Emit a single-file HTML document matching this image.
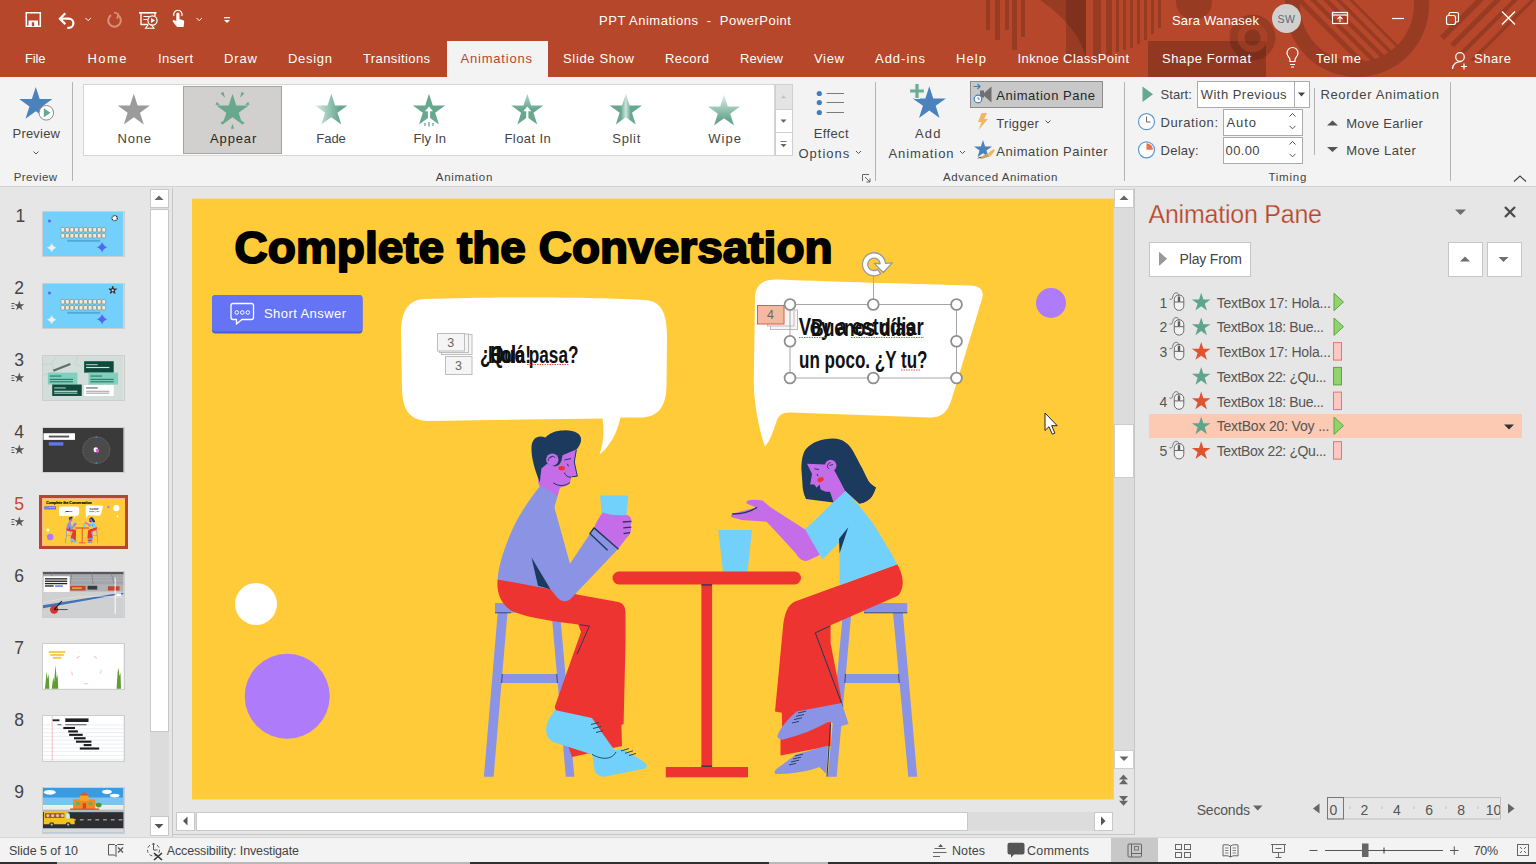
<!DOCTYPE html>
<html><head><meta charset="utf-8"><title>PPT Animations - PowerPoint</title>
<style>
*{box-sizing:border-box;margin:0;padding:0}
html,body{width:1536px;height:864px;overflow:hidden;background:#e6e6e6;font-family:"Liberation Sans",sans-serif;}
.abs{position:absolute}
.t{position:absolute;white-space:pre}
#titlebar{position:absolute;left:0;top:0;width:1536px;height:77px;background:#b7472a;overflow:hidden}
#ribbon{position:absolute;left:0;top:77px;width:1536px;height:110px;background:#f3f3f3;border-bottom:1px solid #d2d2d2}
.sep{position:absolute;width:1px;background:#b4b4b4}
#left{position:absolute;left:0;top:187px;width:172px;height:651px;background:#e6e6e6}
#status{position:absolute;left:0;top:836.500px;width:1536px;height:27.500px;background:#f3f3f3;border-top:1px solid #d6d6d6}
#pane{position:absolute;left:1135px;top:187px;width:401px;height:650px;background:#e6e6e6}
svg{overflow:visible}
</style></head><body>
<!--SLIDE-->
<div class="abs" style="left:173px;top:188px;width:962px;height:650px;background:#e6e6e6"></div>
<svg class="abs" style="left:0;top:0" width="1536" height="864" viewBox="0 0 1536 864">
<g id="slideart">
<rect x="192" y="198.600" width="921.800" height="600.900" fill="#ffcb38"/>
<text x="234.600" y="263.200" font-family="Liberation Sans, sans-serif" font-weight="bold" font-size="43.600" textLength="598" lengthAdjust="spacingAndGlyphs" fill="#000" stroke="#000" stroke-width="1.900" stroke-linejoin="round">Complete the Conversation</text>
<circle cx="256" cy="604" r="21" fill="#fff"/><circle cx="287.200" cy="696.200" r="42.500" fill="#ae7bfa"/><circle cx="1051" cy="303" r="15" fill="#ae7bfa"/>
<rect x="212" y="295" width="150.500" height="38.500" rx="3.500" fill="#4a5bdc"/><rect x="212" y="295" width="150.500" height="36.500" rx="3.500" fill="#6574f5"/>
<path d="M233 303.500 h18.500 a2 2 0 0 1 2 2 v12 a2 2 0 0 1 -2 2 h-9.500 l-5.500 4.500 v-4.500 h-3.500 a2 2 0 0 1 -2 -2 v-12 a2 2 0 0 1 2 -2z" fill="none" stroke="#fff" stroke-width="1.300"/>
<g fill="none" stroke="#fff" stroke-width="1"><circle cx="236.800" cy="312.500" r="1.800"/><circle cx="242.300" cy="312.500" r="1.800"/><circle cx="247.800" cy="312.500" r="1.800"/></g>
<text x="264" y="317.500" font-family="Liberation Sans, sans-serif" font-size="13" textLength="82" lengthAdjust="spacing" fill="#fff">Short Answer</text>
<path d="M425 299 C500 296.500 600 297 645 300 C662 301 667.500 314 667 340 L666.500 385 C666.500 408 657 417.500 640 417.500 L620.500 417.500 C617 434 609 447 599.500 454.500 C603.500 444 604.500 430 602.500 418.500 L430 421 C410 421 402.500 411 402 388 L401 335 C401 310 408 300 425 299Z" fill="#fff"/>
<path d="M755 296 C756 284 764 279 778 279.500 C840 282 920 284 970 285.500 C978.500 285.800 984.500 289 982.300 298 L952 398 C948 412 942 417.500 930 417.500 L790 412.500 C783 412 779 415 777 420 C773 432 770 441 765 446.500 C759 430 753.500 402 753.800 380Z" fill="#fff"/>
<text x="480" y="362.500" font-family="Liberation Sans, sans-serif" font-weight="bold" font-size="23.500" lengthAdjust="spacingAndGlyphs" fill="#111" textLength="98.500">¿Qué pasa?</text>
<text x="490.500" y="362.500" font-family="Liberation Sans, sans-serif" font-weight="bold" font-size="23.500" lengthAdjust="spacingAndGlyphs" fill="#111" textLength="34">Hola</text>
<text x="488" y="363" font-family="Liberation Sans, sans-serif" font-weight="bold" font-size="23.500" lengthAdjust="spacingAndGlyphs" fill="#111" textLength="43">Hola!</text>
<text x="798.800" y="334.600" font-family="Liberation Sans, sans-serif" font-weight="bold" font-size="23.500" lengthAdjust="spacingAndGlyphs" fill="#111" textLength="125">Voy a estudiar</text>
<text x="811" y="336" font-family="Liberation Sans, sans-serif" font-weight="bold" font-size="23.500" lengthAdjust="spacingAndGlyphs" fill="#111" textLength="104">Buenos días</text>
<text x="799" y="367.500" font-family="Liberation Sans, sans-serif" font-weight="bold" font-size="23.500" lengthAdjust="spacingAndGlyphs" fill="#111" textLength="128.500">un poco. ¿Y tu?</text>
<polygon points="718.300,530 752,530 747.500,572 723,572" fill="#72d1fa"/>
<rect x="612.500" y="571.500" width="188.500" height="13" rx="6.500" fill="#ee3430"/>
<rect x="701.400" y="584" width="10.700" height="184" fill="#ee3430"/><rect x="665.800" y="767" width="82.200" height="10.300" fill="#ee3430"/>
<rect x="701.400" y="584.300" width="10.700" height="1.300" fill="#1c3a5e"/><rect x="701.400" y="765.500" width="10.700" height="1.300" fill="#1c3a5e"/>
<g fill="#8a93e4"><rect x="495" y="603" width="66" height="9.800"/><polygon points="497.800,612 507.500,612 493.600,776.700 483.900,776.700"/><polygon points="551.500,612 560,612 574.300,776.700 565.800,776.700"/><polygon points="502,674 557,674 558,683 501,683"/></g>
<path d="M495 612.800 h16 M502.300 674 l-.7 9 M556.700 674 l.8 9" stroke="#1c3a5e" stroke-width="0.800" fill="none"/>
<path d="M497.800 579 C496 590 500 604 512 611 C530 619 560 622 578.300 624.400 L581 632 L554.700 707 L572 757 L622 746 L621.400 725 L623.600 724 L625.500 643 L625.500 613 C625.500 605 622 602.500 617 601.700 L578.300 594.700 L550 588 Z" fill="#ee3430"/>
<path d="M579.700 624.700 L589.400 626 L577 654.400" stroke="#1c3a5e" stroke-width="0.900" fill="none"/>
<path d="M554.700 710 L592 718 C599 728 608 742 616 751.500 L592 754.500 L553 742 C545 738 544.500 728 549 719 Z" fill="#72d1fa"/>
<path d="M592 753 C600 752.500 612 750.500 621 749 C630 753 640 759 645.500 763 C647.500 765 647 767.500 645 768.500 L604 776.800 C598 776.500 595 773 594.500 770 Z" fill="#72d1fa"/>
<g stroke="#1c3a5e" stroke-width="0.900" fill="none"><path d="M591 724.500 l8 -2 M593 728.500 l8 -2 M596 732.500 l7 -1.800 M592 754.300 C600 759 611 761 616 752"/><path d="M621 751 l8 -2.500 M625 753.300 l8 -2.500 M629 755.600 l7 -2.200"/></g>
<path d="M538 482 L545 501 L553 502 L557.500 496.500 L560 487.700 L565.800 486 C568.500 485 570 483.500 570.200 482 L571.600 476.800 L577.300 476.300 L574.200 462 L576.800 449 L560 452 L540 462 Z" fill="#c56ce8"/>
<path d="M539.800 482.500 C535 470 531 458 531.500 447 C532 438 538 434.500 545.500 437.500 C549 433 556 430.300 563.750 430.400 C574 430 582.500 434 581 441 C580.500 444 578.500 447 576.800 449.200 L562.500 455.200 L561.500 460.500 C560.500 464 558 466 555 466.500 L547 463.750 L541.400 468.400 Z" fill="#1c3a5e"/>
<circle cx="552.300" cy="459.600" r="6.200" fill="#c56ce8"/><path d="M548.300 461 a4 4 0 0 1 7 -3.300 M549.500 458.300 l3 -2" stroke="#1c3a5e" stroke-width="0.800" fill="none"/>
<ellipse cx="561.700" cy="468.200" rx="3.300" ry="2.200" fill="#ee3430"/>
<path d="M576.300 450 L574.300 462 L577.300 476.200 L571.600 476.800 M564.300 460 L571 458.500 M567.500 463.800 L568.400 466.400 M564.300 472.600 Q566 477 571 477.300 M553.300 483 Q562 488.500 570 482.500" stroke="#1c3a5e" stroke-width="1" fill="none"/>
<path d="M540.800 485.600 C530 498 515 520 508 540 C500 560 498 572 497.800 579.400 L550.500 589.200 L556 596 C560 601.500 566 603 570.500 599 L618 549 L594 527.700 L570 563.750 L554.400 507.500 L557.500 496 Z" fill="#8a93e4"/>
<polygon points="531.500,557.500 538,585.700 550.500,589.200" fill="#1c3a5e"/>
<polygon points="600.200,495.400 628.300,495.400 626.300,516.500 601.700,516.500" fill="#72d1fa"/>
<path d="M594 527.700 C597 521 599.500 516 603 512.500 C610 515.500 620 515.500 627 515 C632 516.500 632.500 522 630.500 525.500 C632 530 630.500 535 626.500 538 L618 549 Z" fill="#c56ce8"/>
<path d="M622.800 522 l8.500 -.6 M623.300 527.800 l8 -.7 M623.500 533.700 l6.500 -1" stroke="#1c3a5e" stroke-width="1.300" fill="none"/>
<path d="M607.600 550.300 L589.900 533.600 L594 527.900 L618.500 549.300" stroke="#1c3a5e" stroke-width="1.400" fill="none" stroke-linejoin="round"/>
<g fill="#8a93e4"><rect x="863.900" y="603" width="43.300" height="9.800"/><polygon points="843,612 851.400,612 836.700,776.700 827.800,776.700"/><polygon points="893,612.800 902.800,612.800 917.200,776.700 908.300,776.700"/><polygon points="844.400,673.900 899,673.900 899.800,683 843.500,683"/></g>
<path d="M864 612.800 h43.300 M845.500 673.900 l-.7 9 M898.500 673.900 l.8 9" stroke="#1c3a5e" stroke-width="0.800" fill="none"/>
<polygon points="780.500,737 831,721 830.500,746 780.500,755.500" fill="#ee3430"/>
<path d="M795.800 754.400 L828 745.500 L826.400 774 L819.400 767 C812 770.500 790 774.500 775.500 774 C773 772 776 769 779 767 C785 763 791 758 795.800 754.400 Z" fill="#8a93e4"/>
<path d="M814 522 L805.200 529.400 L770.800 507.500 L762.500 500.500 C758 499.500 752 499.500 749 500.200 C746 501 745.500 503 747.500 504 L756.300 507.500 L733 513.500 C730.500 514.500 730.500 517 732.500 517.500 L741.700 520 L766.700 521.700 L795.800 553.300 C799 559 803 562 808 560.500 L818.750 555.400 L828 545 Z" fill="#c56ce8"/>
<path d="M732.300 514 C742 514 751 511.500 757 507.300" stroke="#1c3a5e" stroke-width="1.300" fill="none"/>
<path d="M840.300 585 L897.200 564.200 C902 572 904 582 902 588 C901 592 899 595 897.200 596 L830.600 625.300 L830.600 643.300 L843 707 L797 711.400 L782 712.800 L775 711.400 L783.300 623.900 C785 612 788 605 794.400 601.700 Z" fill="#ee3430"/>
<path d="M830 626 L815.300 632.800 L843 707 M830.500 724 L827 776.700" stroke="#1c3a5e" stroke-width="1" fill="none"/>
<polygon points="781.800,712 798,711 790,722 783.500,731 782.300,731" fill="#ee3430"/>
<path d="M797 711.400 L841.700 703 L848.600 724 L838.900 726.700 L829 721 C815 730 800 735 783.300 739.500 C778 739.500 776.500 737 777.800 735 C780 728 790 716 797 711.400 Z" fill="#8a93e4"/>
<g stroke="#1c3a5e" stroke-width="0.900" fill="none"><path d="M798 713 l8 -1.800 M796 716.300 l8 -1.800 M794 719.600 l8 -1.800 M792 723 l7 -1.600"/><path d="M795 756 l8 -1.800 M793 759 l8 -1.800 M791 762 l8 -1.800 M789 765 l7 -1.600"/></g>
<path d="M801.400 468.750 C801.500 458 803.500 452 806 449 C812 442 822 438.500 833 438.500 C843 438.500 849 444 853 451 C857 458 859 463 862.300 468.750 C864.500 473 866 477 868.500 481.250 C870.500 484 873 486 875.800 487.500 C874.500 491.500 873 495 870.600 498 C867.500 501 864 503 859.200 503.600 L845.100 490.600 L833.600 502.600 L806 499 C803.500 494 802.500 489 802.400 483.300 Z" fill="#1c3a5e"/>
<path d="M807 463.750 L824.800 464.600 L831 465.800 L835.200 471.900 L845.100 490.600 L849 500 L840 510 L833.600 502.600 L830 491.700 L825.800 491.700 L820.600 489.600 L819.600 484.400 L816.500 487.800 L814.400 484.400 L810.200 484.400 L812 474 Z" fill="#c56ce8"/>
<circle cx="830.700" cy="465.600" r="5.800" fill="#c56ce8"/><path d="M829 469 a3.600 3.600 0 0 1 1.500 -6.500 M829.500 465.500 l3.500 -1" stroke="#1c3a5e" stroke-width="0.900" fill="none"/>
<ellipse cx="820.600" cy="479.700" rx="3.300" ry="2.300" transform="rotate(-25 820.600 479.700)" fill="#ee3430"/>
<path d="M814.400 468.750 L819 469.500 M817 474 L818 476.200" stroke="#1c3a5e" stroke-width="1" fill="none"/>
<path d="M845.800 490.800 C856 502 872 520 881.300 536.700 C888 548 893 556 896.900 563.750 L897.200 564.500 L839.600 585.300 L839.400 542.500 L822.400 559.500 L805.200 529.400 L832.300 503.300 Z" fill="#72d1fa"/>
<polygon points="848.300,527.300 839,538.750 839.600,553.300" fill="#1c3a5e"/>
<path d="M836 470 L845 490.400 L859.200 503.600 C864 503 867.500 501 870.600 498 C873 495 874.500 491.500 875.800 487.500 C873 486 870.500 484 868.500 481.250 C866 477 864.500 473 862.300 468.750 L856 458 Z" fill="#1c3a5e"/>
</g>
<g stroke="#e0413a" stroke-width="0.900" stroke-dasharray="1.500 1" fill="none"><path d="M527 364.500 h42 M799 337.500 h28 M851 337.500 h73 M901 370 h19"/></g>
<rect x="441.500" y="334.500" width="30.500" height="20" fill="#f5f5f5" stroke="#bdbdbd" stroke-width="1"/><rect x="439.500" y="334" width="29" height="18.500" fill="#f5f5f5" stroke="#bdbdbd" stroke-width="1"/><rect x="437.500" y="333.500" width="27" height="17.500" fill="#f5f5f5" stroke="#bdbdbd" stroke-width="1"/>
<rect x="445.500" y="356.500" width="26.500" height="18" fill="#f5f5f5" stroke="#bdbdbd" stroke-width="1"/>
<rect x="770.500" y="310" width="27" height="19.500" fill="#f5f5f5" stroke="#bdbdbd" stroke-width="1"/><rect x="767.500" y="307.500" width="26.500" height="18.500" fill="#f5f5f5" stroke="#bdbdbd" stroke-width="1"/>
<rect x="757.500" y="305.500" width="26.500" height="18.500" fill="#f5b9a3" stroke="#db5e3e" stroke-width="1"/>
<path d="M873.500 276 V304.500" stroke="#a6a6a6" stroke-width="1"/>
<rect x="790" y="304.500" width="166.500" height="73.500" fill="none" stroke="#a6a6a6" stroke-width="1"/>
<circle cx="790.0" cy="304.5" r="5.400" fill="#fff" stroke="#8f8f8f" stroke-width="1.800"/>
<circle cx="873.3" cy="304.5" r="5.400" fill="#fff" stroke="#8f8f8f" stroke-width="1.800"/>
<circle cx="956.5" cy="304.5" r="5.400" fill="#fff" stroke="#8f8f8f" stroke-width="1.800"/>
<circle cx="790.0" cy="341.3" r="5.400" fill="#fff" stroke="#8f8f8f" stroke-width="1.800"/>
<circle cx="956.5" cy="341.3" r="5.400" fill="#fff" stroke="#8f8f8f" stroke-width="1.800"/>
<circle cx="790.0" cy="378.0" r="5.400" fill="#fff" stroke="#8f8f8f" stroke-width="1.800"/>
<circle cx="873.3" cy="378.0" r="5.400" fill="#fff" stroke="#8f8f8f" stroke-width="1.800"/>
<circle cx="956.5" cy="378.0" r="5.400" fill="#fff" stroke="#8f8f8f" stroke-width="1.800"/>
<path d="M880.600 273.720 A11.500 11.500 0 1 1 885.460 263.300 L892.300 262.900 L883.300 272.500 L874.200 263.400 L880.180 263.760 A6.200 6.200 0 1 0 877.560 269.380 Z" fill="#fff" stroke="#9a9a9a" stroke-width="1.300" stroke-linejoin="round"/>
<path d="M1045 413 v17.500 l4 -3.800 l3.300 7.500 l2.600 -1.100 l-3.200 -7.400 h5.500z" fill="#fff" stroke="#222" stroke-width="1" stroke-linejoin="round"/>
</svg>
<span class="t" style="left:447.30px;top:332.97px;font-size:12.5px;line-height:20px;color:#666;">3</span>
<span class="t" style="left:455.00px;top:356.17px;font-size:12.5px;line-height:20px;color:#666;">3</span>
<span class="t" style="left:767.00px;top:305.17px;font-size:12.5px;line-height:20px;color:#666;">4</span>
<div class="abs" style="left:1114px;top:188.500px;width:20px;height:561px;background:#dcdcdc"></div>
<div class="abs" style="left:1114px;top:188.500px;width:20px;height:19px;background:#fff;border:1px solid #cdcdcd"></div>
<div class="abs" style="left:1114px;top:424px;width:20px;height:54px;background:#fff;border:1px solid #cdcdcd"></div>
<div class="abs" style="left:1114px;top:749.500px;width:20px;height:19px;background:#fff;border:1px solid #cdcdcd"></div>
<svg class="abs" style="left:1114px;top:188px" width="20" height="630" viewBox="0 0 20 630"><path d="M5.500 12 l4.500 -4.500 l4.500 4.500z" fill="#666"/><path d="M5.500 568.500 l4.500 4.500 l4.500 -4.500z" fill="#666"/><path d="M5 591.500 l4.500 -5 l4.500 5z M5 596.300 l4.500 -5 l4.500 5z" fill="#666"/><path d="M5 608 l4.500 5 l4.500 -5z M5 612.800 l4.500 5 l4.500 -5z" fill="#666"/></svg>
<div class="abs" style="left:1134px;top:188px;width:1px;height:647px;background:#c6c6c6"></div>
<div class="abs" style="left:173px;top:834px;width:962px;height:1px;background:#c6c6c6"></div>
<div class="abs" style="left:176px;top:811.500px;width:936.500px;height:19px;background:#dcdcdc"></div>
<div class="abs" style="left:176px;top:811.500px;width:19px;height:19px;background:#fff;border:1px solid #c8c8c8"></div>
<div class="abs" style="left:195.500px;top:811.500px;width:772px;height:19px;background:#fff;border:1px solid #c8c8c8"></div>
<div class="abs" style="left:1093.500px;top:811.500px;width:19px;height:19px;background:#fff;border:1px solid #c8c8c8"></div>
<svg class="abs" style="left:176px;top:811px" width="940" height="20" viewBox="0 0 940 20"><path d="M11.500 5.500 l-4.500 4.500 l4.500 4.500z" fill="#555"/><path d="M925 5.500 l4.500 4.500 l-4.500 4.500z" fill="#555"/></svg>
<!--LEFT-->
<div id="left"></div>
<span class="t" style="left:15.50px;top:205.64px;font-size:17.5px;line-height:20px;color:#444;">1</span>
<svg class="abs" style="left:43.400px;top:211.6px;outline:1px solid #cdcdcd" width="80.400" height="44.7" viewBox="0 0 83 47" preserveAspectRatio="none"><rect width="83" height="47" fill="#72d0fa"/><circle cx="6.700" cy="9.500" r="1.600" fill="#5b6be6"/><circle cx="74" cy="6.500" r="2.700" fill="#fff" stroke="#333" stroke-width="1.300" stroke-dasharray="1.400 0.600"/><path d="M9.0 32.5 Q10.1 36.4 14.0 37.5 Q10.1 38.6 9.0 42.5 Q7.9 38.6 4.0 37.5 Q7.9 36.4 9.0 32.5z" fill="#f1efe9"/><path d="M61.0 31.5 Q62.2 35.8 66.5 37.0 Q62.2 38.2 61.0 42.5 Q59.8 38.2 55.5 37.0 Q59.8 35.8 61.0 31.5z" fill="#5466f0"/><g fill="#f3ead6" stroke="#6b6b6b" stroke-width="0.500"><rect x="18.5" y="16.300" width="3.900" height="4.700" rx="1"/><rect x="23.2" y="16.300" width="3.900" height="4.700" rx="1"/><rect x="27.9" y="16.300" width="3.900" height="4.700" rx="1"/><rect x="32.6" y="16.300" width="3.900" height="4.700" rx="1"/><rect x="37.3" y="16.300" width="3.900" height="4.700" rx="1"/><rect x="42.0" y="16.300" width="3.900" height="4.700" rx="1"/><rect x="46.7" y="16.300" width="3.900" height="4.700" rx="1"/><rect x="51.4" y="16.300" width="3.900" height="4.700" rx="1"/><rect x="56.1" y="16.300" width="3.900" height="4.700" rx="1"/><rect x="60.8" y="16.300" width="3.900" height="4.700" rx="1"/><rect x="18.5" y="22.600" width="3.900" height="4.700" rx="1"/><rect x="23.2" y="22.600" width="3.900" height="4.700" rx="1"/><rect x="27.9" y="22.600" width="3.900" height="4.700" rx="1"/><rect x="32.6" y="22.600" width="3.900" height="4.700" rx="1"/><rect x="37.3" y="22.600" width="3.900" height="4.700" rx="1"/><rect x="42.0" y="22.600" width="3.900" height="4.700" rx="1"/><rect x="46.7" y="22.600" width="3.900" height="4.700" rx="1"/><rect x="51.4" y="22.600" width="3.900" height="4.700" rx="1"/><rect x="56.1" y="22.600" width="3.900" height="4.700" rx="1"/><rect x="60.8" y="22.600" width="3.900" height="4.700" rx="1"/></g><rect x="25" y="29.300" width="34" height="2" fill="#4a9fd0" opacity="0.800"/></svg>
<span class="t" style="left:14.20px;top:277.69px;font-size:17.5px;line-height:20px;color:#444;">2</span>
<svg class="abs" style="left:11px;top:300.2px" width="14" height="12" viewBox="0 0 14 12"><polygon points="8.30,0.40 9.51,4.13 13.44,4.13 10.26,6.44 11.47,10.17 8.30,7.86 5.13,10.17 6.34,6.44 3.16,4.13 7.09,4.13" fill="#555" /><path d="M0.500 3.500 h3 M0.500 6 h2 M0.500 8.500 h3" stroke="#555" stroke-width="1"/></svg>
<svg class="abs" style="left:43.400px;top:283.6px;outline:1px solid #cdcdcd" width="80.400" height="44.7" viewBox="0 0 83 47" preserveAspectRatio="none"><rect width="83" height="47" fill="#72d0fa"/><circle cx="6.700" cy="9.500" r="1.600" fill="#5b6be6"/><polygon points="72.00,2.30 72.94,5.20 75.99,5.20 73.53,7.00 74.47,9.90 72.00,8.10 69.53,9.90 70.47,7.00 68.01,5.20 71.06,5.20" fill="#2a2a3a"  stroke="#2a2a3a" stroke-width="0.800"/><circle cx="72" cy="6.700" r="1.200" fill="#ddd"/><path d="M9.0 32.5 Q10.1 36.4 14.0 37.5 Q10.1 38.6 9.0 42.5 Q7.9 38.6 4.0 37.5 Q7.9 36.4 9.0 32.5z" fill="#f1efe9"/><path d="M61.0 31.5 Q62.2 35.8 66.5 37.0 Q62.2 38.2 61.0 42.5 Q59.8 38.2 55.5 37.0 Q59.8 35.8 61.0 31.5z" fill="#5466f0"/><g fill="#f3ead6" stroke="#6b6b6b" stroke-width="0.500"><rect x="18.5" y="16.300" width="3.900" height="4.700" rx="1"/><rect x="23.2" y="16.300" width="3.900" height="4.700" rx="1"/><rect x="27.9" y="16.300" width="3.900" height="4.700" rx="1"/><rect x="32.6" y="16.300" width="3.900" height="4.700" rx="1"/><rect x="37.3" y="16.300" width="3.900" height="4.700" rx="1"/><rect x="42.0" y="16.300" width="3.900" height="4.700" rx="1"/><rect x="46.7" y="16.300" width="3.900" height="4.700" rx="1"/><rect x="51.4" y="16.300" width="3.900" height="4.700" rx="1"/><rect x="56.1" y="16.300" width="3.900" height="4.700" rx="1"/><rect x="60.8" y="16.300" width="3.900" height="4.700" rx="1"/><rect x="18.5" y="22.600" width="3.900" height="4.700" rx="1"/><rect x="23.2" y="22.600" width="3.900" height="4.700" rx="1"/><rect x="27.9" y="22.600" width="3.900" height="4.700" rx="1"/><rect x="32.6" y="22.600" width="3.900" height="4.700" rx="1"/><rect x="37.3" y="22.600" width="3.900" height="4.700" rx="1"/><rect x="42.0" y="22.600" width="3.900" height="4.700" rx="1"/><rect x="46.7" y="22.600" width="3.900" height="4.700" rx="1"/><rect x="51.4" y="22.600" width="3.900" height="4.700" rx="1"/><rect x="56.1" y="22.600" width="3.900" height="4.700" rx="1"/><rect x="60.8" y="22.600" width="3.900" height="4.700" rx="1"/></g><rect x="25" y="29.300" width="34" height="2" fill="#4a9fd0" opacity="0.800"/></svg>
<span class="t" style="left:14.20px;top:349.74px;font-size:17.5px;line-height:20px;color:#444;">3</span>
<svg class="abs" style="left:11px;top:372.3px" width="14" height="12" viewBox="0 0 14 12"><polygon points="8.30,0.40 9.51,4.13 13.44,4.13 10.26,6.44 11.47,10.17 8.30,7.86 5.13,10.17 6.34,6.44 3.16,4.13 7.09,4.13" fill="#555" /><path d="M0.500 3.500 h3 M0.500 6 h2 M0.500 8.500 h3" stroke="#555" stroke-width="1"/></svg>
<svg class="abs" style="left:43.400px;top:355.7px;outline:1px solid #cdcdcd" width="80.400" height="44.7" viewBox="0 0 83 47" preserveAspectRatio="none"><rect width="83" height="47" fill="#d3ddda"/><path d="M0 9 l9 -1 l5 -8 M9 8 l3 9 l-12 3 M36 0 l-3 8 l7 4" stroke="#c5cfcc" stroke-width="0.800" fill="none"/><g transform="rotate(-22 20 12)"><rect x="10" y="10.500" width="19" height="2.400" fill="#5f6f6a"/></g><rect x="42.500" y="5.500" width="30.500" height="12" fill="#0f4a3c"/><rect x="5" y="17.500" width="30.500" height="12.500" fill="#7fd1bd"/><rect x="47" y="17.500" width="30.500" height="12.500" fill="#7fd1bd"/><rect x="9.500" y="30" width="30.500" height="12" fill="#0f4a3c"/><rect x="42.500" y="30.500" width="30.500" height="11.500" fill="#fff"/><rect x="44.5" y="8.5" width="12" height="1.200" fill="#9fc9bd"/><rect x="44.5" y="11.5" width="24" height="1.200" fill="#cfe8df"/><rect x="7.0" y="20.5" width="12" height="1.200" fill="#2f7a68"/><rect x="7.0" y="24.0" width="24" height="1.200" fill="#2f7a68"/><rect x="7.0" y="26.5" width="24" height="1.200" fill="#2f7a68"/><rect x="49.0" y="20.5" width="12" height="1.200" fill="#2f7a68"/><rect x="49.0" y="24.0" width="24" height="1.200" fill="#2f7a68"/><rect x="49.0" y="26.5" width="24" height="1.200" fill="#2f7a68"/><rect x="11.5" y="33.0" width="12" height="1.200" fill="#9fc9bd"/><rect x="11.5" y="36.5" width="24" height="1.200" fill="#cfe8df"/><rect x="11.5" y="38.5" width="24" height="1.200" fill="#9fc9bd"/><rect x="44.5" y="33.0" width="12" height="1.200" fill="#666"/><rect x="44.5" y="36.5" width="24" height="1.200" fill="#aaa"/><rect x="44.5" y="38.5" width="24" height="1.200" fill="#aaa"/></svg>
<span class="t" style="left:14.20px;top:421.79px;font-size:17.5px;line-height:20px;color:#444;">4</span>
<svg class="abs" style="left:11px;top:444.3px" width="14" height="12" viewBox="0 0 14 12"><polygon points="8.30,0.40 9.51,4.13 13.44,4.13 10.26,6.44 11.47,10.17 8.30,7.86 5.13,10.17 6.34,6.44 3.16,4.13 7.09,4.13" fill="#555" /><path d="M0.500 3.500 h3 M0.500 6 h2 M0.500 8.500 h3" stroke="#555" stroke-width="1"/></svg>
<svg class="abs" style="left:43.400px;top:427.7px;outline:1px solid #cdcdcd" width="80.400" height="44.7" viewBox="0 0 83 47" preserveAspectRatio="none"><rect width="83" height="47" fill="#3a3a3a"/><rect width="83" height="47" fill="url(#chalk)"/><rect x="0.500" y="5.500" width="32.500" height="7" fill="#fff"/><rect x="6" y="8" width="21" height="2" fill="#555"/><rect x="6" y="15" width="15" height="3.500" fill="#6574f5"/><circle cx="55" cy="23.300" r="14" fill="#4a4a4a" stroke="#8a8a8a" stroke-width="0.600" stroke-dasharray="1 0.700"/><circle cx="54.500" cy="22.500" r="2.300" fill="#fff"/><circle cx="56" cy="24" r="2.100" fill="#d65bd6"/><circle cx="53.800" cy="24.300" r="1.300" fill="#eee"/><path d="M53.800 10.300 h2.600 l-1.300 -2z M53.800 36.300 h2.600 l-1.300 2z" fill="#3a8fd6"/></svg>
<span class="t" style="left:14.20px;top:493.84px;font-size:17.5px;line-height:20px;color:#c8472b;">5</span>
<svg class="abs" style="left:11px;top:516.4px" width="14" height="12" viewBox="0 0 14 12"><polygon points="8.30,0.40 9.51,4.13 13.44,4.13 10.26,6.44 11.47,10.17 8.30,7.86 5.13,10.17 6.34,6.44 3.16,4.13 7.09,4.13" fill="#555" /><path d="M0.500 3.500 h3 M0.500 6 h2 M0.500 8.500 h3" stroke="#555" stroke-width="1"/></svg>
<div class="abs" style="left:39px;top:495.2px;width:88.700px;height:54px;background:#b7472a"></div>
<div class="abs" style="left:41.700px;top:497.7px;width:83.500px;height:48.300px;background:#eeb7a6"></div>
<svg class="abs" style="left:42.700px;top:498.9px" width="81.500" height="46" viewBox="192 198.600 1071 601" preserveAspectRatio="none"><rect x="1100" y="198" width="170" height="603" fill="#ffcb38"/><use href="#slideart"/><circle cx="1156" cy="318" r="40" fill="#fff"/><path d="M1170 402 Q1174 421 1193 425 Q1174 429 1170 448 Q1166 429 1147 425 Q1166 421 1170 402z" fill="#fff8e0"/></svg>
<span class="t" style="left:14.20px;top:565.89px;font-size:17.5px;line-height:20px;color:#444;">6</span>
<svg class="abs" style="left:43.400px;top:571.9px;outline:1px solid #cdcdcd" width="80.400" height="44.7" viewBox="0 0 83 47" preserveAspectRatio="none"><rect width="83" height="47" fill="#c4c6c8"/><rect y="0" width="83" height="14" fill="#a3a6aa"/><rect y="0" width="83" height="2.500" fill="#55585c"/><path d="M0 3 h83 M0 6 h83 M0 9 h83" stroke="#b5b8bc" stroke-width="0.700"/><path d="M10 0 l-4 14 M30 0 l-2 14 M50 0 l2 14 M70 0 l4 14" stroke="#6f7378" stroke-width="0.600"/><rect y="13" width="83" height="8" fill="#b0b3b6"/><rect x="28" y="14.500" width="16" height="5" fill="#c9452c"/><rect x="67" y="15" width="12" height="4.500" fill="#c9452c"/><rect x="46" y="14.500" width="10" height="4" fill="#3a3a3a"/><rect x="30" y="16" width="10" height="2" fill="#d8a23a"/><rect y="20.500" width="83" height="26.500" fill="#cfd0d1"/><path d="M0 35 L74 22.800 L83 21.800 L83 23.300 L74 24.500 L0 38z" fill="#3f73b5"/><path d="M0 32 Q40 22 83 27" stroke="#e8e8e8" stroke-width="0.600" fill="none"/><rect x="0.500" y="4.500" width="27" height="16.500" fill="#fff"/><rect x="2" y="6.5" width="23" height="1.400" fill="#222"/><rect x="2" y="9.0" width="23" height="1.400" fill="#222"/><rect x="2" y="11.5" width="23" height="1.400" fill="#222"/><rect x="2" y="14.0" width="9" height="1.400" fill="#222"/><rect x="12.500" y="14" width="8" height="1.600" fill="#6574f5"/><circle cx="11.500" cy="39.500" r="4.300" fill="#d8332e"/><path d="M11.500 39.500 L19.500 30.500" stroke="#111" stroke-width="1.100"/><path d="M11.500 39.500 h14" stroke="#111" stroke-width="0.700"/><rect x="74" y="6" width="1" height="38" fill="#fff"/><rect x="75.500" y="22.500" width="5" height="3" fill="#fff"/></svg>
<span class="t" style="left:14.20px;top:637.94px;font-size:17.5px;line-height:20px;color:#444;">7</span>
<svg class="abs" style="left:43.400px;top:643.9px;outline:1px solid #cdcdcd" width="80.400" height="44.7" viewBox="0 0 83 47" preserveAspectRatio="none"><rect width="83" height="47" fill="#fff"/><rect x="6.0" y="7.5" width="17" height="2" fill="#f7c84a"/><rect x="7.5" y="10.5" width="14" height="2" fill="#f7c84a"/><rect x="10.0" y="13.5" width="9" height="2" fill="#f7c84a"/><g stroke="#f6c6c6" stroke-width="1.100"><path d="M34.500 15 l3.500 -2.500 M52.500 12.500 l3 2.500 M59 31 l1.500 -4 M42 41.500 l4.500 .5 M30.500 33 l-1 -4"/></g><g fill="#5e9e30"><path d="M2 47 l1.800 -18 l1 8 l1 -6 l.8 16z"/><path d="M9 47 l1.500 -12 l1 5 l1.500 -18 l1 14 l1 -4 l.8 15z"/><path d="M76 47 l1 -17 l1 -5 l1 9 l1 -4 l.5 17z"/></g></svg>
<span class="t" style="left:14.20px;top:709.99px;font-size:17.5px;line-height:20px;color:#444;">8</span>
<svg class="abs" style="left:43.400px;top:715.9px;outline:1px solid #cdcdcd" width="80.400" height="44.7" viewBox="0 0 83 47" preserveAspectRatio="none"><rect width="83" height="47" fill="#fff"/><path d="M0 9.500 h83" stroke="#dfe6f2" stroke-width="0.700"/><path d="M0 13.500 h83" stroke="#dfe6f2" stroke-width="0.700"/><path d="M0 17.500 h83" stroke="#dfe6f2" stroke-width="0.700"/><path d="M0 21.500 h83" stroke="#dfe6f2" stroke-width="0.700"/><path d="M0 25.500 h83" stroke="#dfe6f2" stroke-width="0.700"/><path d="M0 29.500 h83" stroke="#dfe6f2" stroke-width="0.700"/><path d="M0 33.500 h83" stroke="#dfe6f2" stroke-width="0.700"/><path d="M0 37.500 h83" stroke="#dfe6f2" stroke-width="0.700"/><path d="M0 41.500 h83" stroke="#dfe6f2" stroke-width="0.700"/><path d="M0 45.500 h83" stroke="#dfe6f2" stroke-width="0.700"/><path d="M9.500 0 v47" stroke="#f3a0a0" stroke-width="0.700"/><rect x="10" y="3.500" width="7" height="2" fill="#222"/><rect x="23" y="2.500" width="24" height="3.800" fill="#222"/><rect x="23" y="8.500" width="22" height="1.300" fill="#777"/><rect x="15" y="8.500" width="4" height="1.300" fill="#777"/><rect x="21" y="11.5" width="12" height="2.200" fill="#1a1a1a"/><rect x="26" y="15.1" width="10" height="2.200" fill="#1a1a1a"/><rect x="27" y="18.7" width="14" height="2.200" fill="#1a1a1a"/><rect x="32" y="22.3" width="12" height="2.200" fill="#1a1a1a"/><rect x="34" y="25.9" width="16" height="2.200" fill="#1a1a1a"/><rect x="42" y="29.5" width="8" height="2.200" fill="#1a1a1a"/><rect x="38" y="33.1" width="20" height="2.200" fill="#1a1a1a"/></svg>
<span class="t" style="left:14.20px;top:782.04px;font-size:17.5px;line-height:20px;color:#444;">9</span>
<svg class="abs" style="left:43.400px;top:788.0px;outline:1px solid #cdcdcd" width="80.400" height="44.7" viewBox="0 0 83 47" preserveAspectRatio="none"><rect width="83" height="47" fill="#3a9be0"/><rect y="10" width="83" height="12" fill="#7cc4f0"/><g fill="#fff"><ellipse cx="7" cy="4.500" rx="6" ry="2.500"/><ellipse cx="66" cy="4" rx="5" ry="2.200"/><ellipse cx="74" cy="8" rx="5" ry="2"/></g><rect y="18" width="83" height="5" fill="#e6efe8"/><path d="M0 18.500 h83" stroke="#fff" stroke-width="1" stroke-dasharray="0.800 0.800"/><rect x="31" y="12" width="23" height="10" fill="#f08a24"/><rect x="38" y="7.500" width="9" height="6" fill="#f5a623"/><path d="M37 8 l5.500 -3.500 l5.500 3.500z" fill="#e0552a"/><rect x="34" y="15" width="4" height="3" fill="#58b368"/><rect x="47" y="15" width="4" height="3" fill="#58b368"/><rect x="41" y="16" width="3.500" height="6" fill="#d9432a"/><ellipse cx="57.500" cy="18" rx="3" ry="2.500" fill="#4e9a2e"/><rect x="28" y="21.500" width="30" height="1.700" fill="#e0552a"/><rect y="23" width="83" height="2.500" fill="#b8b8b8"/><rect y="25.500" width="83" height="17" fill="#2e2e30"/><path d="M30 33.500 h53" stroke="#ddd" stroke-width="0.900" stroke-dasharray="4 4"/><rect y="42.500" width="83" height="4.500" fill="#d9d9d9"/><path d="M1 25 h23 q2.500 0 3 3 l1.200 4 h3 q1.500 0 1.500 1.500 v4.500 h-32z" fill="#f2c21e"/><rect x="2" y="26.500" width="20" height="5" fill="#8a5a3c"/><g fill="#f1b6a0"><circle cx="5" cy="29" r="1.700"/><circle cx="10" cy="29" r="1.700"/><circle cx="15" cy="29" r="1.700"/><circle cx="20" cy="29" r="1.700"/></g><rect x="24" y="27" width="3.500" height="5" fill="#cfe8f5"/><circle cx="9" cy="38.500" r="2.600" fill="#333"/><circle cx="9" cy="38.500" r="1.100" fill="#bbb"/><circle cx="26" cy="38.500" r="2.600" fill="#333"/><circle cx="26" cy="38.500" r="1.100" fill="#bbb"/></svg>
<div class="abs" style="left:149.500px;top:188.500px;width:19px;height:647px;background:#dcdcdc"></div>
<div class="abs" style="left:149.500px;top:188.500px;width:19px;height:19px;background:#fff;border:1px solid #c8c8c8"></div>
<div class="abs" style="left:149.500px;top:208.500px;width:19px;height:523.500px;background:#fff;border:1px solid #c8c8c8"></div>
<div class="abs" style="left:149.500px;top:816px;width:19px;height:19.500px;background:#fff;border:1px solid #c8c8c8"></div>
<svg class="abs" style="left:149px;top:188px" width="20" height="650" viewBox="0 0 20 650"><path d="M5.500 12 l4.500 -4.500 l4.500 4.500z" fill="#666"/><path d="M5.500 636 l4.500 4.500 l4.500 -4.500z" fill="#555"/></svg>
<div class="abs" style="left:172px;top:188px;width:1px;height:649px;background:#c6c6c6"></div>
<!--PANE-->
<div id="pane"></div>
<span class="t" style="left:1148.50px;top:203.84px;font-size:25px;line-height:20px;color:#b7472a;letter-spacing:-0.231px;-webkit-text-stroke:0.250px #e6e6e6;">Animation Pane</span>
<div class="abs" style="left:1149px;top:242px;width:101.500px;height:35px;background:#fff;border:1px solid #c6c6c6"></div>
<div class="abs" style="left:1448px;top:242px;width:35px;height:35px;background:#fff;border:1px solid #c6c6c6"></div>
<div class="abs" style="left:1486.500px;top:242px;width:35.500px;height:35px;background:#fff;border:1px solid #c6c6c6"></div>
<span class="t" style="left:1179.50px;top:248.75px;font-size:14px;line-height:20px;color:#444;letter-spacing:-0.161px;">Play From</span>
<div class="abs" style="left:1149px;top:413.500px;width:373px;height:24.500px;background:#fccab3"></div>
<svg class="abs" style="left:0;top:0" width="1536" height="864" viewBox="0 0 1536 864">
<path d="M1455 209.500 h11 l-5.500 5.500z" fill="#6e6e6e"/>
<path d="M1505 207 l10 10 m0 -10 l-10 10" stroke="#4a4a4a" stroke-width="2.300"/>
<path d="M1159.500 252.500 l7 6.300 l-7 6.300z" fill="#9a9a9a" stroke="#8a8a8a" stroke-width="0.800"/>
<path d="M1460 261.500 l5 -5 l5 5z" fill="#6e6e6e"/><path d="M1498.500 257 l5 5 l5 -5z" fill="#6e6e6e"/>
<g fill="none" stroke="#6a6a6a" stroke-width="1"><rect x="1174.3" y="295.0" width="9.5" height="15.4" rx="4.600" fill="#f2f2f2"/><path d="M1174.3 302.0 h9.5"/><rect x="1177.8" y="296.6" width="2.4" height="5.200" fill="#5e5e5e" stroke="none"/><path d="M1179.0 295.0 v1.500"/><path d="M1179.0 295.0 C1177.8 291.8 1174.0 292.0 1173.0 295.8 S1171.8 299.6 1169.5 299.2" stroke-width="0.900"/></g>
<polygon points="1201.20,292.70 1203.40,299.47 1210.52,299.47 1204.76,303.66 1206.96,310.43 1201.20,306.24 1195.44,310.43 1197.64,303.66 1191.88,299.47 1199.00,299.47" fill="#5fa58c" />
<path d="M1334 293.3 l9.500 8.700 l-9.500 8.700z" fill="#92d36e" stroke="#5aa83c" stroke-width="1"/>
<g fill="none" stroke="#6a6a6a" stroke-width="1"><rect x="1174.3" y="319.7" width="9.5" height="15.4" rx="4.600" fill="#f2f2f2"/><path d="M1174.3 326.7 h9.5"/><rect x="1177.8" y="321.3" width="2.4" height="5.200" fill="#5e5e5e" stroke="none"/><path d="M1179.0 319.7 v1.500"/><path d="M1179.0 319.7 C1177.8 316.5 1174.0 316.7 1173.0 320.5 S1171.8 324.3 1169.5 323.9" stroke-width="0.900"/></g>
<polygon points="1201.20,317.40 1203.40,324.17 1210.52,324.17 1204.76,328.36 1206.96,335.13 1201.20,330.94 1195.44,335.13 1197.64,328.36 1191.88,324.17 1199.00,324.17" fill="#5fa58c" />
<path d="M1334 318.0 l9.500 8.700 l-9.500 8.700z" fill="#92d36e" stroke="#5aa83c" stroke-width="1"/>
<g fill="none" stroke="#6a6a6a" stroke-width="1"><rect x="1174.3" y="344.4" width="9.5" height="15.4" rx="4.600" fill="#f2f2f2"/><path d="M1174.3 351.4 h9.5"/><rect x="1177.8" y="346.0" width="2.4" height="5.200" fill="#5e5e5e" stroke="none"/><path d="M1179.0 344.4 v1.500"/><path d="M1179.0 344.4 C1177.8 341.2 1174.0 341.4 1173.0 345.2 S1171.8 349.0 1169.5 348.6" stroke-width="0.900"/></g>
<polygon points="1201.20,342.10 1203.40,348.87 1210.52,348.87 1204.76,353.06 1206.96,359.83 1201.20,355.64 1195.44,359.83 1197.64,353.06 1191.88,348.87 1199.00,348.87" fill="#e0532f" />
<rect x="1333.500" y="342.6" width="8" height="17.500" fill="#ffc7c2" stroke="#e2786c" stroke-width="1"/>
<polygon points="1201.20,366.90 1203.40,373.67 1210.52,373.67 1204.76,377.86 1206.96,384.63 1201.20,380.44 1195.44,384.63 1197.64,377.86 1191.88,373.67 1199.00,373.67" fill="#5fa58c" />
<rect x="1333.500" y="367.4" width="8" height="17.500" fill="#92d36e" stroke="#5aa83c" stroke-width="1"/>
<g fill="none" stroke="#6a6a6a" stroke-width="1"><rect x="1174.3" y="393.9" width="9.5" height="15.4" rx="4.600" fill="#f2f2f2"/><path d="M1174.3 400.9 h9.5"/><rect x="1177.8" y="395.5" width="2.4" height="5.200" fill="#5e5e5e" stroke="none"/><path d="M1179.0 393.9 v1.500"/><path d="M1179.0 393.9 C1177.8 390.7 1174.0 390.9 1173.0 394.7 S1171.8 398.5 1169.5 398.1" stroke-width="0.900"/></g>
<polygon points="1201.20,391.60 1203.40,398.37 1210.52,398.37 1204.76,402.56 1206.96,409.33 1201.20,405.14 1195.44,409.33 1197.64,402.56 1191.88,398.37 1199.00,398.37" fill="#e0532f" />
<rect x="1333.500" y="392.1" width="8" height="17.500" fill="#ffc7c2" stroke="#e2786c" stroke-width="1"/>
<polygon points="1201.20,416.40 1203.40,423.17 1210.52,423.17 1204.76,427.36 1206.96,434.13 1201.20,429.94 1195.44,434.13 1197.64,427.36 1191.88,423.17 1199.00,423.17" fill="#5fa58c" />
<path d="M1334 417.0 l9.500 8.700 l-9.500 8.700z" fill="#92d36e" stroke="#5aa83c" stroke-width="1"/>
<g fill="none" stroke="#6a6a6a" stroke-width="1"><rect x="1174.3" y="443.5" width="9.5" height="15.4" rx="4.600" fill="#f2f2f2"/><path d="M1174.3 450.5 h9.5"/><rect x="1177.8" y="445.1" width="2.4" height="5.200" fill="#5e5e5e" stroke="none"/><path d="M1179.0 443.5 v1.500"/><path d="M1179.0 443.5 C1177.8 440.3 1174.0 440.5 1173.0 444.3 S1171.8 448.1 1169.5 447.7" stroke-width="0.900"/></g>
<polygon points="1201.20,441.20 1203.40,447.97 1210.52,447.97 1204.76,452.16 1206.96,458.93 1201.20,454.74 1195.44,458.93 1197.64,452.16 1191.88,447.97 1199.00,447.97" fill="#e0532f" />
<rect x="1333.500" y="441.7" width="8" height="17.500" fill="#ffc7c2" stroke="#e2786c" stroke-width="1"/>
<path d="M1504 424.500 h10 l-5 5z" fill="#333"/>
<path d="M1253 805.500 h9.500 l-4.750 5z" fill="#666"/>
<path d="M1319.500 803.500 l-6.500 5 l6.500 5z" fill="#666"/><path d="M1508 803.500 l6.500 5 l-6.500 5z" fill="#666"/>
<rect x="1327.500" y="797.500" width="173" height="21.500" fill="none" stroke="#c0c0c0" stroke-width="1"/>
<rect x="1327.500" y="797.500" width="16" height="21.500" fill="none" stroke="#777" stroke-width="1"/>
<rect x="1349.5" y="806.500" width="1" height="2.500" fill="#bbb"/>
<rect x="1381.5" y="806.500" width="1" height="2.500" fill="#bbb"/>
<rect x="1413.5" y="806.500" width="1" height="2.500" fill="#bbb"/>
<rect x="1445.5" y="806.500" width="1" height="2.500" fill="#bbb"/>
<rect x="1477.5" y="806.500" width="1" height="2.500" fill="#bbb"/>
</svg>
<span class="t" style="left:1159.50px;top:292.65px;font-size:14px;line-height:20px;color:#555;">1</span>
<span class="t" style="left:1216.70px;top:292.65px;font-size:14px;line-height:20px;color:#555;letter-spacing:-0.190px;">TextBox 17: Hola...</span>
<span class="t" style="left:1159.50px;top:317.35px;font-size:14px;line-height:20px;color:#555;">2</span>
<span class="t" style="left:1216.70px;top:317.35px;font-size:14px;line-height:20px;color:#555;letter-spacing:-0.373px;">TextBox 18: Bue...</span>
<span class="t" style="left:1159.50px;top:342.05px;font-size:14px;line-height:20px;color:#555;">3</span>
<span class="t" style="left:1216.70px;top:342.05px;font-size:14px;line-height:20px;color:#555;letter-spacing:-0.190px;">TextBox 17: Hola...</span>
<span class="t" style="left:1216.70px;top:366.85px;font-size:14px;line-height:20px;color:#555;letter-spacing:-0.362px;">TextBox 22: ¿Qu...</span>
<span class="t" style="left:1159.50px;top:391.55px;font-size:14px;line-height:20px;color:#555;">4</span>
<span class="t" style="left:1216.70px;top:391.55px;font-size:14px;line-height:20px;color:#555;letter-spacing:-0.373px;">TextBox 18: Bue...</span>
<span class="t" style="left:1216.70px;top:416.35px;font-size:14px;line-height:20px;color:#555;letter-spacing:-0.176px;">TextBox 20: Voy ...</span>
<span class="t" style="left:1159.50px;top:441.15px;font-size:14px;line-height:20px;color:#555;">5</span>
<span class="t" style="left:1216.70px;top:441.15px;font-size:14px;line-height:20px;color:#555;letter-spacing:-0.362px;">TextBox 22: ¿Qu...</span>
<span class="t" style="left:1196.70px;top:799.55px;font-size:14px;line-height:20px;color:#555;letter-spacing:-0.198px;">Seconds</span>
<span class="t" style="left:1329.50px;top:799.55px;font-size:14px;line-height:20px;color:#555;">0</span>
<span class="t" style="left:1360.50px;top:799.55px;font-size:14px;line-height:20px;color:#555;">2</span>
<span class="t" style="left:1393.00px;top:799.55px;font-size:14px;line-height:20px;color:#555;">4</span>
<span class="t" style="left:1425.30px;top:799.55px;font-size:14px;line-height:20px;color:#555;">6</span>
<span class="t" style="left:1457.30px;top:799.55px;font-size:14px;line-height:20px;color:#555;">8</span>
<div class="abs" style="left:1484px;top:797px;width:16px;height:22px;overflow:hidden"><span class="t" style="left:1.70px;top:2.55px;font-size:14px;line-height:20px;color:#555;">10</span></div>
<!--TITLEBAR-->
<div id="titlebar">
<svg class="abs" style="left:0;top:0" width="1536" height="77" viewBox="0 0 1536 77">
<defs><clipPath id="cin"><circle cx="1357" cy="5" r="57"/></clipPath></defs>
<g fill="#000" fill-opacity="0.165">
<rect x="986" y="0" width="4" height="30"/><rect x="995" y="0" width="5" height="40"/><rect x="1005" y="0" width="4" height="30"/>
<rect x="1012" y="0" width="5" height="50"/><rect x="1021" y="0" width="4" height="37"/>
<path d="M1040 0 h46 v58 q-2 -8 -8 -20 q-14 -22 -38 -38z"/>
<rect x="1066" y="0" width="20" height="60"/>
<rect x="1093" y="0" width="8" height="62"/><rect x="1106" y="0" width="6" height="55"/><rect x="1116" y="0" width="3" height="52"/>
<rect x="1123" y="0" width="3" height="50"/><rect x="1130" y="0" width="3" height="48"/><rect x="1137" y="0" width="3" height="44"/>
<rect x="1144" y="0" width="3" height="40"/><rect x="1151" y="0" width="3" height="34"/><rect x="1158" y="0" width="3" height="28"/>
<circle cx="1194" cy="2" r="18"/>
<rect x="1148" y="41" width="118" height="36" fill-opacity="0.200"/>
<circle cx="1252.500" cy="37.500" r="23"/>
<path d="M1357 -67 a72 72 0 1 0 .1 0z M1357 -52 a57 57 0 1 1 -.1 0z" fill-rule="evenodd"/>
<g clip-path="url(#cin)"><path d="M1296 0 h7 l75 75 h-7z M1310 0 h6 l75 75 h-6z M1323 0 h6 l75 75 h-6z M1336 0 h5 l75 75 h-5z M1349 0 h4 l75 75 h-4z"/></g>
<path d="M1440 36 l36 -36 h8 l-40 40z M1450 44 l44 -44 h7 l-47 47z M1460 52 l52 -52 h6 l-54 54z M1470 60 l60 -60 h5 l-61 61z"/>
</g>
<circle cx="1252.500" cy="37.500" r="15" fill="#b7472a" fill-opacity="0.500"/>
<circle cx="1252.500" cy="37.500" r="8" fill="#000" fill-opacity="0.180"/>
</svg>
<div class="abs" style="left:446.500px;top:41px;width:101.500px;height:37px;background:#f3f3f3"></div>
<span class="t" style="left:599.00px;top:10.50px;font-size:13px;line-height:20px;color:#fff;letter-spacing:0.517px;">PPT Animations  -  PowerPoint</span>
<span class="t" style="left:1172.00px;top:10.50px;font-size:13px;line-height:20px;color:#fff;letter-spacing:0.202px;">Sara Wanasek</span>
<div class="abs" style="left:1272px;top:4px;width:29px;height:29px;border-radius:50%;background:#d2d0ce"></div>
<span class="t" style="left:1277.50px;top:9.36px;font-size:10.5px;line-height:20px;color:#5a6a7a;letter-spacing:0.586px;">SW</span>
<span class="t" style="left:25.00px;top:49.00px;font-size:13px;line-height:20px;color:#fff;letter-spacing:-0.150px;">File</span>
<span class="t" style="left:87.50px;top:49.00px;font-size:13px;line-height:20px;color:#fff;letter-spacing:1.440px;">Home</span>
<span class="t" style="left:158.00px;top:49.00px;font-size:13px;line-height:20px;color:#fff;letter-spacing:0.497px;">Insert</span>
<span class="t" style="left:224.00px;top:49.00px;font-size:13px;line-height:20px;color:#fff;letter-spacing:0.887px;">Draw</span>
<span class="t" style="left:288.00px;top:49.00px;font-size:13px;line-height:20px;color:#fff;letter-spacing:0.706px;">Design</span>
<span class="t" style="left:363.00px;top:49.00px;font-size:13px;line-height:20px;color:#fff;letter-spacing:0.390px;">Transitions</span>
<span class="t" style="left:563.00px;top:49.00px;font-size:13px;line-height:20px;color:#fff;letter-spacing:0.662px;">Slide Show</span>
<span class="t" style="left:665.00px;top:49.00px;font-size:13px;line-height:20px;color:#fff;letter-spacing:0.418px;">Record</span>
<span class="t" style="left:740.00px;top:49.00px;font-size:13px;line-height:20px;color:#fff;letter-spacing:0.075px;">Review</span>
<span class="t" style="left:814.00px;top:49.00px;font-size:13px;line-height:20px;color:#fff;letter-spacing:0.685px;">View</span>
<span class="t" style="left:875.00px;top:49.00px;font-size:13px;line-height:20px;color:#fff;letter-spacing:0.986px;">Add-ins</span>
<span class="t" style="left:956.00px;top:49.00px;font-size:13px;line-height:20px;color:#fff;letter-spacing:1.087px;">Help</span>
<span class="t" style="left:1017.50px;top:49.00px;font-size:13px;line-height:20px;color:#fff;letter-spacing:0.420px;">Inknoe ClassPoint</span>
<span class="t" style="left:1162.00px;top:49.00px;font-size:13px;line-height:20px;color:#fff;letter-spacing:0.602px;">Shape Format</span>
<span class="t" style="left:1316.00px;top:49.00px;font-size:13px;line-height:20px;color:#fff;letter-spacing:0.637px;">Tell me</span>
<span class="t" style="left:1474.00px;top:49.00px;font-size:13px;line-height:20px;color:#fff;letter-spacing:0.577px;">Share</span>
<span class="t" style="left:460.50px;top:49.00px;font-size:13px;line-height:20px;color:#b7472a;letter-spacing:0.799px;">Animations</span>
<svg class="abs" style="left:0;top:0" width="1536" height="77" viewBox="0 0 1536 77" fill="none" stroke="#fff" stroke-width="1.5">
<!-- save -->
<path d="M26.300 12.800 h14 v13.400 h-14z" stroke-width="1.500"/><rect x="28.500" y="20.500" width="9.500" height="5.700" fill="#fff" stroke="none"/><rect x="31.800" y="22.300" width="2.400" height="3.900" fill="#b7472a" stroke="none"/>
<!-- undo -->
<path d="M60.500 18.700 h8.300 a4.600 4.600 0 0 1 0 9.200 h-1.500" stroke-width="2.200"/><path d="M65.300 13.300 l-5.400 5.400 l5.400 5.400" stroke-width="2.200"/>
<path d="M85.500 18 l2.700 2.700 l2.700 -2.700" stroke-width="1"/>
<!-- redo dim -->
<g stroke="#d9907c"><path d="M117.500 14.800 a6.300 6.300 0 1 1 -6.500 .3" stroke-width="2"/><path d="M114 12.300 l4.300 1.800 l-1.300 4.600" stroke-width="1.600"/></g>
<!-- present -->
<path d="M139 12.8 h17.5" stroke-width="1.6"/><path d="M141 13 v11.5 h7" stroke-width="1.3"/><path d="M155 13 v3" stroke-width="1.3"/>
<path d="M143.5 16.5 h6 M143.5 19.5 h4" stroke-width="1"/><circle cx="152.5" cy="20.5" r="4.6" stroke-width="1.2"/><path d="M151 18 l4 2.5 l-4 2.5z" fill="#fff" stroke="none"/>
<path d="M148.5 24.5 l-3 3.7 h8.5 l-3 -3.7" stroke-width="1.1"/>
<!-- touch -->
<path d="M176.3 21 v-6.8 a1.6 1.6 0 0 1 3.2 0 v5 l3.2 .7 a1.8 1.8 0 0 1 1.5 2 l-.6 5 h-6.5 l-4.4 -5.4 a1.2 1.2 0 0 1 1.8 -1.3z" fill="#fff" stroke="none"/>
<path d="M174 16 a4.2 4.2 0 1 1 7.8 0" stroke-width="1.2"/>
<path d="M196.5 18 l2.7 2.7 l2.7 -2.7" stroke-width="1"/>
<!-- qat customize -->
<path d="M224 17.7 h6" stroke-width="1.2"/><path d="M224 20 h6 l-3 3z" fill="#fff" stroke="none"/>
<!-- window controls -->
<rect x="1332.500" y="12.500" width="15" height="11" stroke-width="1.2"/><path d="M1333 15 h14" stroke-width="1.2"/><path d="M1340 22 v-5 m-2.500 2 l2.500 -2.500 l2.500 2.500" stroke-width="1.1"/>
<path d="M1392 18.500 h12" stroke-width="1.2"/>
<rect x="1446.500" y="15.500" width="9" height="9" rx="2" stroke-width="1.200"/><path d="M1449 15 v-1 a1.500 1.500 0 0 1 1.500 -1.500 h6.500 a1.500 1.500 0 0 1 1.500 1.500 v6.500 a1.500 1.500 0 0 1 -1.500 1.500 h-1" stroke-width="1.200"/>
<path d="M1502 11.500 l13 13 m0 -13 l-13 13" stroke-width="1.4"/>
<!-- bulb -->
<path d="M1290 61.500 v-2 c0 -1.700 -3 -3 -3 -6.500 a5.500 5.500 0 0 1 11 0 c0 3.500 -3 4.800 -3 6.500 v2z" stroke-width="1.200"/><path d="M1290 64.500 h5 M1291 67 h3" stroke-width="1.200"/>
<!-- share -->
<circle cx="1460" cy="57" r="4.300" stroke-width="1.200"/><path d="M1452.500 69 a7.500 7.500 0 0 1 9 -7.300" stroke-width="1.200"/><path d="M1461 66.500 h6 m-3 -3 v6" stroke-width="1.200"/>
</svg>
</div>
<!--RIBBON-->
<div id="ribbon"></div>
<div class="abs" style="left:83px;top:83.500px;width:692px;height:72px;background:#fff;border:1px solid #d6d6d6"></div>
<div class="abs" style="left:183px;top:85.500px;width:98.500px;height:68.500px;background:#d2d0ce;border:1px solid #a3a3a3"></div>
<div class="abs" style="left:774.500px;top:83.500px;width:18px;height:26px;background:#e4e4e4;border:1px solid #d0d0d0"></div>
<div class="abs" style="left:774.500px;top:108.500px;width:18px;height:24px;background:#fff;border:1px solid #cfcfcf"></div>
<div class="abs" style="left:774.500px;top:131.500px;width:18px;height:24px;background:#fff;border:1px solid #cfcfcf"></div>
<svg class="abs" style="left:0;top:0" width="1536" height="190" viewBox="0 0 1536 190">
<defs>
<linearGradient id="gfade" x1="0" x2="1" y1="0" y2="0"><stop offset="0" stop-color="#d9ebe4"/><stop offset="0.75" stop-color="#67a88f"/></linearGradient>
<linearGradient id="gsplit" x1="0" x2="1" y1="0" y2="0"><stop offset="0.35" stop-color="#67a88f"/><stop offset="0.5" stop-color="#cfe5dc"/><stop offset="0.65" stop-color="#67a88f"/></linearGradient>
<linearGradient id="gwipe" x1="0" x2="0" y1="0" y2="1"><stop offset="0.1" stop-color="#cfe5dc"/><stop offset="0.8" stop-color="#67a88f"/></linearGradient>
<linearGradient id="gfloat" x1="0" x2="0" y1="0" y2="1"><stop offset="0" stop-color="#b5d6ca"/><stop offset="0.5" stop-color="#67a88f"/></linearGradient>
</defs>
<polygon points="35.80,87.00 39.73,99.09 52.44,99.09 42.16,106.57 46.09,118.66 35.80,111.19 25.51,118.66 29.44,106.57 19.16,99.09 31.87,99.09" fill="#4a82bd" />
<circle cx="46.300" cy="112.800" r="7.300" fill="#fff" stroke="#8a8a8a" stroke-width="1"/><path d="M43.800 108.300 l6.800 4.500 l-6.800 4.500z" fill="#67a88f"/>
<path d="M33.500 151.500 l2.500 2.500 l2.500 -2.500" fill="none" stroke="#555" stroke-width="1"/>
<polygon points="133.80,93.80 137.62,105.55 149.97,105.55 139.98,112.81 143.79,124.55 133.80,117.29 123.81,124.55 127.62,112.81 117.63,105.55 129.98,105.55" fill="#9b9b9b" />
<polygon points="232.50,93.80 236.32,105.55 248.67,105.55 238.68,112.81 242.49,124.55 232.50,117.29 222.51,124.55 226.32,112.81 216.33,105.55 228.68,105.55" fill="#67a88f" />
<path d="M240.00 97.81 L244.39 93.41 L241.61 91.81z" fill="#67a88f"/>
<path d="M225.00 97.81 L223.39 91.81 L220.61 93.41z" fill="#67a88f"/>
<path d="M219.81 104.88 L216.86 101.74 L215.51 104.64z" fill="#67a88f"/>
<path d="M245.19 104.88 L249.49 104.64 L248.14 101.74z" fill="#67a88f"/>
<path d="M224.79 119.99 L220.35 122.79 L222.80 124.85z" fill="#67a88f"/>
<path d="M240.21 119.99 L242.20 124.85 L244.65 122.79z" fill="#67a88f"/>
<path d="M232.50 123.80 L230.90 128.80 L234.10 128.80z" fill="#67a88f"/>
<polygon points="331.30,93.80 335.12,105.55 347.47,105.55 337.48,112.81 341.29,124.55 331.30,117.29 321.31,124.55 325.12,112.81 315.13,105.55 327.48,105.55" fill="url(#gfade)" />
<polygon points="429.00,93.80 432.82,105.55 445.17,105.55 435.18,112.81 438.99,124.55 429.00,117.29 419.01,124.55 422.82,112.81 412.83,105.55 425.18,105.55" fill="#67a88f" />
<path d="M429 106.500 l4 4.800 h-2.900 v9.200 h-2.200 v-9.200 h-2.900z" fill="#fff"/><path d="M425 121.500 v4 M429 119.500 v6 M433 121.500 v4" stroke="#fff" stroke-width="1.300"/>
<path d="M425 123 v3 M429 122 v4.500 M433 123 v3" stroke="#67a88f" stroke-width="1.300"/>
<polygon points="527.30,93.80 531.12,105.55 543.47,105.55 533.48,112.81 537.29,124.55 527.30,117.29 517.31,124.55 521.12,112.81 511.13,105.55 523.48,105.55" fill="url(#gfloat)" />
<path d="M527.300 106.500 l4 4.800 h-2.900 v10 l-1.100 -1.600 l-1.100 1.600 v-10 h-2.900z" fill="#fff"/>
<polygon points="625.80,93.80 629.62,105.55 641.97,105.55 631.98,112.81 635.79,124.55 625.80,117.29 615.81,124.55 619.62,112.81 609.63,105.55 621.98,105.55" fill="url(#gsplit)" />
<polygon points="724.00,94.80 727.82,106.55 740.17,106.55 730.18,113.81 733.99,125.55 724.00,118.29 714.01,125.55 717.82,113.81 707.83,106.55 720.18,106.55" fill="url(#gwipe)" />
<path d="M780.700 98.300 l2.800 -3 l2.800 3z" fill="#c4c4c4"/>
<path d="M780.500 119.500 h6 l-3 3.300z" fill="#666"/>
<path d="M780.500 141.500 h6" stroke="#777" stroke-width="1"/><path d="M780.500 144 h6 l-3 3.300z" fill="#666"/>
<circle cx="819.300" cy="93.5" r="2.600" fill="#3e7fc1"/><path d="M826.500 93.5 h17.500" stroke="#7a7a7a" stroke-width="1"/>
<circle cx="819.300" cy="102.5" r="2.600" fill="#3e7fc1"/><path d="M826.500 102.5 h17.500" stroke="#7a7a7a" stroke-width="1"/>
<circle cx="819.300" cy="112.5" r="2.600" fill="#3e7fc1"/><path d="M826.500 112.5 h17.500" stroke="#7a7a7a" stroke-width="1"/>
<path d="M856 151 l2.500 2.500 l2.500 -2.500" fill="none" stroke="#555" stroke-width="1"/>
<path d="M862.500 174.500 h-0 v6.500 M862.500 174.500 h6.500" fill="none" stroke="#666" stroke-width="1"/><path d="M865 177 l5 5 m0 -3.500 v3.500 h-3.500" fill="none" stroke="#666" stroke-width="1"/>
<polygon points="929.30,86.30 933.23,98.39 945.94,98.39 935.66,105.87 939.59,117.96 929.30,110.48 919.01,117.96 922.94,105.87 912.66,98.39 925.37,98.39" fill="#4a82bd" />
<path d="M914.800 83.500 h4.400 v5.300 h5.300 v4.400 h-5.300 v5.300 h-4.400 v-5.300 h-5.300 v-4.400 h5.300z" fill="#6dab93" stroke="#f3f3f3" stroke-width="1.200"/>
<path d="M960 151 l2.500 2.500 l2.500 -2.500" fill="none" stroke="#555" stroke-width="1"/>
</svg>
<div class="abs" style="left:1197px;top:80.500px;width:112.500px;height:27px;background:#fff;border:1px solid #ababab"></div>
<div class="abs" style="left:1294px;top:81px;width:1px;height:26px;background:#ababab"></div>
<div class="abs" style="left:1223px;top:108.500px;width:80px;height:27px;background:#fff;border:1px solid #ababab"></div>
<div class="abs" style="left:1222.500px;top:136.500px;width:80px;height:27px;background:#fff;border:1px solid #ababab"></div>
<div class="abs" style="left:970px;top:81px;width:132.500px;height:27px;background:#c8c8c8;border:1px solid #8c8c8c"></div>
<svg class="abs" style="left:0;top:0" width="1536" height="190" viewBox="0 0 1536 190">
<path d="M983 94 l8.500 -7.500 v16 l-8.500 -7.500 h-2.500 v-1z" fill="#707070"/><rect x="980" y="90.500" width="4" height="7" fill="#707070"/>
<path d="M973.500 86.500 h6.500 m-2.500 -2.500 l2.500 2.500 l-2.500 2.500" fill="none" stroke="#3e7fc1" stroke-width="1.200"/>
<circle cx="978" cy="99" r="3.800" fill="#fff" stroke="#3e7fc1" stroke-width="1.200"/><path d="M978 97 v2.200 h1.800" fill="none" stroke="#3e7fc1" stroke-width="0.900"/>
<path d="M981.500 113 h5.500 l-3 6 h4 l-9.500 11 l3 -8 h-3.500z" fill="#f2b75c"/>
<path d="M1045.500 120.500 l2.500 2.500 l2.500 -2.500" fill="none" stroke="#555" stroke-width="1"/>
<polygon points="983.00,140.00 985.13,146.56 992.04,146.56 986.45,150.62 988.58,157.19 983.00,153.13 977.42,157.19 979.55,150.62 973.96,146.56 980.87,146.56" fill="#4a82bd" />
<path d="M993.500 149 l-6 4.500 l3 3 l4.500 -6z" fill="#f2b75c"/><path d="M987 153.500 l-7 4 l1.500 1.500 l8.500 -2.500z" fill="#c9a36b"/><path d="M977 158.500 l3.500 -2 l1 1.500z" fill="#555"/>
<path d="M1142.500 86.500 l10.500 7.700 l-10.500 7.700z" fill="#67a88f"/>
<circle cx="1146.500" cy="121.700" r="8" fill="#fff" stroke="#5b9bd5" stroke-width="1.200"/><path d="M1146.500 116.500 v5.500 h4" fill="none" stroke="#666" stroke-width="1"/>
<circle cx="1146.500" cy="149.800" r="8" fill="#fff" stroke="#5b9bd5" stroke-width="1.200"/><path d="M1146.500 149.800 v-6.500 a6.500 6.500 0 0 1 6.500 6.500z" fill="#e8714a"/>
<path d="M1298 92.500 h7 l-3.500 4z" fill="#444"/>
<path d="M1289.500 116.5 l3 -3 l3 3" fill="none" stroke="#555" stroke-width="1"/><path d="M1289.500 125.8 l3 3 l3 -3" fill="none" stroke="#555" stroke-width="1"/>
<path d="M1289.500 144.5 l3 -3 l3 3" fill="none" stroke="#555" stroke-width="1"/><path d="M1289.500 153.8 l3 3 l3 -3" fill="none" stroke="#555" stroke-width="1"/>
<path d="M1327 125.500 l5.500 -5 l5.500 5z" fill="#555"/><path d="M1327 147 l5.500 5 l5.500 -5z" fill="#555"/>
<path d="M1514 181.500 l6 -5.500 l6 5.500" fill="none" stroke="#444" stroke-width="1.200"/>
</svg>
<div class="sep" style="left:72.0px;top:82px;height:99px"></div>
<div class="sep" style="left:875.0px;top:82px;height:99px"></div>
<div class="sep" style="left:1124.0px;top:82px;height:99px"></div>
<div class="sep" style="left:1314.0px;top:88px;height:67px"></div>
<div class="sep" style="left:1449.5px;top:82px;height:99px"></div>
<span class="t" style="left:12.50px;top:124.20px;font-size:13px;line-height:20px;color:#444;letter-spacing:0.210px;">Preview</span>
<span class="t" style="left:13.80px;top:167.02px;font-size:11.5px;line-height:20px;color:#444;letter-spacing:0.383px;">Preview</span>
<span class="t" style="left:117.50px;top:129.20px;font-size:13px;line-height:20px;color:#444;letter-spacing:0.807px;">None</span>
<span class="t" style="left:210.00px;top:129.20px;font-size:13px;line-height:20px;color:#262626;letter-spacing:0.875px;">Appear</span>
<span class="t" style="left:316.30px;top:129.20px;font-size:13px;line-height:20px;color:#444;letter-spacing:-0.044px;">Fade</span>
<span class="t" style="left:413.50px;top:129.20px;font-size:13px;line-height:20px;color:#444;letter-spacing:0.143px;">Fly In</span>
<span class="t" style="left:504.50px;top:129.20px;font-size:13px;line-height:20px;color:#444;letter-spacing:0.421px;">Float In</span>
<span class="t" style="left:612.30px;top:129.20px;font-size:13px;line-height:20px;color:#444;letter-spacing:0.677px;">Split</span>
<span class="t" style="left:708.30px;top:129.20px;font-size:13px;line-height:20px;color:#444;letter-spacing:1.027px;">Wipe</span>
<span class="t" style="left:435.80px;top:167.02px;font-size:11.5px;line-height:20px;color:#444;letter-spacing:0.670px;">Animation</span>
<span class="t" style="left:813.80px;top:124.00px;font-size:13px;line-height:20px;color:#444;letter-spacing:0.340px;">Effect</span>
<span class="t" style="left:798.50px;top:143.50px;font-size:13px;line-height:20px;color:#444;letter-spacing:1.000px;">Options</span>
<span class="t" style="left:915.00px;top:124.00px;font-size:13px;line-height:20px;color:#444;letter-spacing:1.184px;">Add</span>
<span class="t" style="left:888.50px;top:143.50px;font-size:13px;line-height:20px;color:#444;letter-spacing:0.898px;">Animation</span>
<span class="t" style="left:996.30px;top:85.80px;font-size:13px;line-height:20px;color:#262626;letter-spacing:0.532px;">Animation Pane</span>
<span class="t" style="left:996.30px;top:114.00px;font-size:13px;line-height:20px;color:#444;letter-spacing:0.300px;">Trigger</span>
<span class="t" style="left:996.30px;top:141.50px;font-size:13px;line-height:20px;color:#444;letter-spacing:0.536px;">Animation Painter</span>
<span class="t" style="left:943.00px;top:167.02px;font-size:11.5px;line-height:20px;color:#444;letter-spacing:0.556px;">Advanced Animation</span>
<span class="t" style="left:1160.60px;top:85.10px;font-size:13px;line-height:20px;color:#444;letter-spacing:0.027px;">Start:</span>
<span class="t" style="left:1200.70px;top:85.10px;font-size:13px;line-height:20px;color:#444;letter-spacing:0.476px;">With Previous</span>
<span class="t" style="left:1160.60px;top:113.00px;font-size:13px;line-height:20px;color:#444;letter-spacing:0.581px;">Duration:</span>
<span class="t" style="left:1226.40px;top:113.00px;font-size:13px;line-height:20px;color:#444;letter-spacing:0.952px;">Auto</span>
<span class="t" style="left:1160.60px;top:140.80px;font-size:13px;line-height:20px;color:#444;letter-spacing:0.210px;">Delay:</span>
<span class="t" style="left:1225.60px;top:140.80px;font-size:13px;line-height:20px;color:#444;letter-spacing:0.342px;">00.00</span>
<span class="t" style="left:1320.40px;top:85.30px;font-size:13px;line-height:20px;color:#444;letter-spacing:0.683px;">Reorder Animation</span>
<span class="t" style="left:1346.20px;top:113.80px;font-size:13px;line-height:20px;color:#444;letter-spacing:0.330px;">Move Earlier</span>
<span class="t" style="left:1346.20px;top:141.20px;font-size:13px;line-height:20px;color:#444;letter-spacing:0.507px;">Move Later</span>
<span class="t" style="left:1268.40px;top:167.02px;font-size:11.5px;line-height:20px;color:#444;letter-spacing:0.764px;">Timing</span>
<!--STATUS-->
<div id="status"></div>
<div class="abs" style="left:1111px;top:838px;width:47px;height:25px;background:#c8c8c8"></div>
<span class="t" style="left:9.00px;top:840.67px;font-size:12.5px;line-height:20px;color:#444;letter-spacing:-0.041px;">Slide 5 of 10</span>
<span class="t" style="left:166.70px;top:840.67px;font-size:12.5px;line-height:20px;color:#444;letter-spacing:-0.127px;">Accessibility: Investigate</span>
<span class="t" style="left:952.00px;top:840.67px;font-size:12.5px;line-height:20px;color:#444;letter-spacing:0.087px;">Notes</span>
<span class="t" style="left:1027.00px;top:840.67px;font-size:12.5px;line-height:20px;color:#444;letter-spacing:0.225px;">Comments</span>
<span class="t" style="left:1473.80px;top:840.67px;font-size:12.5px;line-height:20px;color:#444;letter-spacing:-0.409px;">70%</span>
<svg class="abs" style="left:0;top:836px" width="1536" height="28" viewBox="0 836 1536 28" fill="none" stroke="#555" stroke-width="1">
<path d="M108.500 844.500 h6 l1.500 1.500 v10.500 l-1.500 -1.500 h-6z M123.500 844.500 h-6 l-1.500 1.500"/><path d="M118 847.500 l5 5 m0 -5 l-5 5" stroke-width="1.300"/>
<circle cx="153.500" cy="850" r="6" stroke-dasharray="3 2.200"/><path d="M153.500 843 v7 h4" /><path d="M154 853 l8 7 m0 -7 l-8 7" stroke="#333" stroke-width="1.600"/>
<path d="M938.200 847 l2.400 -3 l2.400 3z" fill="#555" stroke="none"/><path d="M934.500 848.500 h11 M933 852.500 h13.500 M933 856.500 h7" stroke="#666"/>
<path d="M1009.500 842.800 h13 a2 2 0 0 1 2 2 v7.800 a2 2 0 0 1 -2 2 h-8.500 l-3 3.200 v-3.200 h-1.500 a2 2 0 0 1 -2 -2 v-7.800 a2 2 0 0 1 2 -2z" fill="#555" stroke="none"/>
<rect x="1128" y="844" width="13.500" height="13" rx="1" stroke="#666"/><path d="M1131.500 844 v13 M1131.500 853.500 h10" stroke="#666"/><rect x="1134.500" y="846.500" width="4" height="3.500" stroke="#777"/>
<g stroke="#666"><rect x="1175.500" y="844.500" width="6" height="5"/><rect x="1184.500" y="844.500" width="6" height="5"/><rect x="1175.500" y="852.500" width="6" height="5"/><rect x="1184.500" y="852.500" width="6" height="5"/></g>
<g stroke="#666"><path d="M1230.500 846 c-2 -1.500 -5 -1.500 -7.500 -1 v11 c2.500 -.5 5.500 -.5 7.500 1 c2 -1.500 5 -1.500 7.500 -1 v-11 c-2.500 -.5 -5.500 -.5 -7.500 1z M1230.500 846 v11"/><path d="M1225 848 h3.500 M1225 850.500 h3.500 M1225 853 h3.500 M1232.500 848 h3.500 M1232.500 850.500 h3.500 M1232.500 853 h3.500" stroke-width="0.800"/></g>
<g stroke="#666"><path d="M1271 844.500 h15 M1272.500 844.500 v8 h12 v-8 M1278.500 852.500 v5 M1275.500 857.500 h6 M1275.500 848.500 h6"/></g>
<path d="M1309.500 850.500 h8 M1325 850.500 h118 M1450 850.500 h8.500 M1454.250 846.300 v8.500" stroke="#555"/><path d="M1384 847.500 v6" stroke="#333"/>
<rect x="1362" y="843.500" width="6.500" height="13.500" fill="#666" stroke="none"/>
<g stroke="#666"><rect x="1517.500" y="844.500" width="11" height="11"/><path d="M1520 847 l2 2 M1526 847 l-2 2 M1520 853 l2 -2 M1526 853 l-2 -2"/></g>
</svg>
<div class="abs" style="left:0;top:862px;width:1536px;height:2px;background:#b8b8b8"></div>
<div class="abs" style="left:0px;top:862px;width:57px;height:2px;background:#303030"></div>
<div class="abs" style="left:470px;top:862px;width:299px;height:2px;background:#303030"></div>
<div class="abs" style="left:828px;top:862px;width:708px;height:2px;background:#303030"></div>
</body></html>
